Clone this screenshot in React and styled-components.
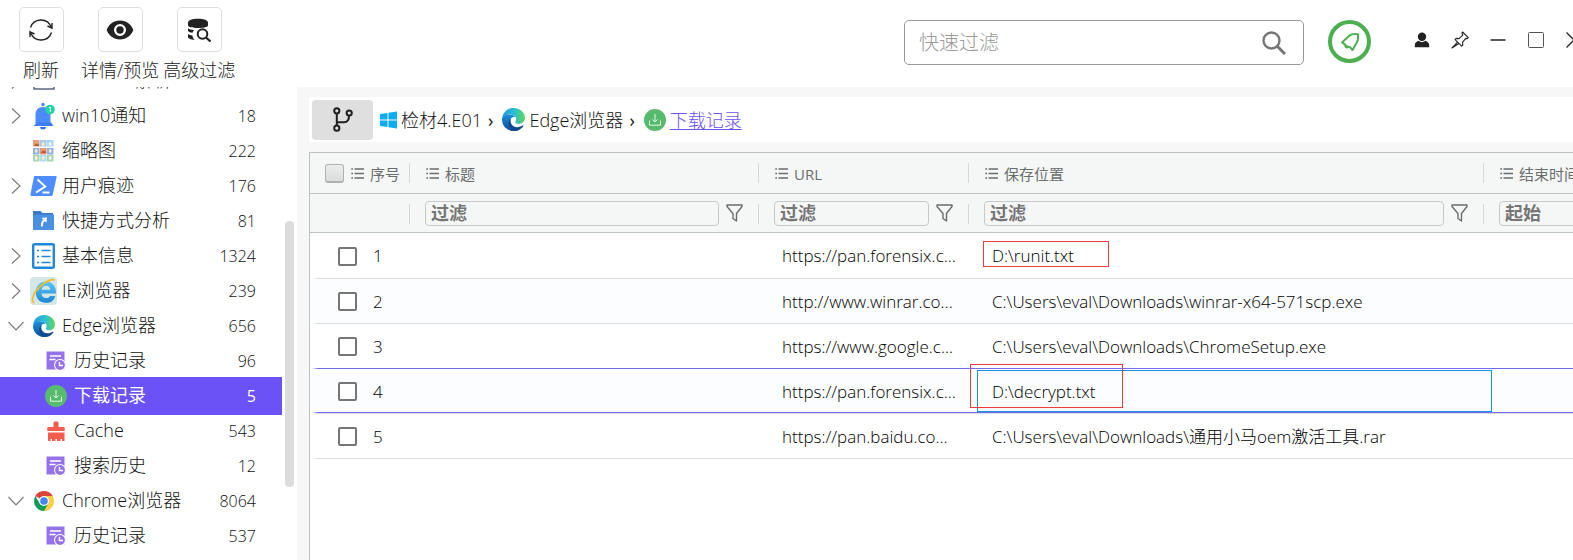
import React from "react";
import styled, { createGlobalStyle, css } from "styled-components";

const latin = '"Open Sans", "Noto Sans CJK SC", sans-serif';

const GlobalStyle = createGlobalStyle`
  *, *::before, *::after { box-sizing: border-box; }
  body {
    margin: 0;
    overflow: hidden;
    background: #fff;
    color: #111;
    font-family: ${latin};
    font-weight: 300;
    font-size: 18px;
  }
  button, input { font-family: inherit; }
  svg { display: block; flex: none; }
`;

const Page = styled.div`
  display: flex;
  flex-direction: column;
  height: 100vh;
`;

/* ---------- top bar ---------- */
const TopBar = styled.header`
  display: flex;
  flex: none;
  height: 87px;
  padding-left: 5px;
`;

const Tools = styled.div`
  display: flex;
  gap: 4px;
  padding-top: 7px;
`;

const ToolButton = styled.button`
  display: flex;
  flex-direction: column;
  align-items: center;
  gap: 5px;
  min-width: 72px;
  padding: 0;
  border: 0;
  background: none;
  color: #222;
  font-size: 18px;
  font-weight: 300;
  line-height: 26px;
  white-space: nowrap;
`;

const ToolIcon = styled.span`
  display: grid;
  place-items: center;
  width: 45px;
  height: 45px;
  border: 1px solid #dedede;
  border-radius: 5px;
`;

const TopRight = styled.div`
  display: flex;
  align-items: flex-start;
  margin-left: auto;
  margin-right: -20px;
  padding-top: 20px;
`;

const SearchBox = styled.label`
  display: flex;
  align-items: center;
  width: 400px;
  height: 45px;
  padding: 0 17px 0 13px;
  border: 1px solid #999;
  border-radius: 5px;
  color: #757575;
`;

const SearchInput = styled.input`
  flex: 1;
  min-width: 0;
  padding: 0 0 0 1px;
  border: 0;
  outline: 0;
  background: none;
  font-size: 20px;
  font-weight: 300;
  line-height: 28px;
  &::placeholder { color: #999; opacity: 1; }
`;

const BellButton = styled.button`
  display: grid;
  place-items: center;
  width: 43px;
  height: 43px;
  margin: 0 32px 0 24px;
  padding: 0;
  border: 4px solid #4caf50;
  border-radius: 50%;
  background: #fff;
  color: #4caf50;
`;

const WindowButton = styled.button`
  display: grid;
  place-items: center;
  width: 38px;
  height: 40px;
  padding: 0;
  border: 0;
  background: none;
  color: #222;
`;

/* ---------- body ---------- */
const Body = styled.div`
  display: flex;
  flex: 1;
  min-height: 0;
`;

const Sidebar = styled.nav`
  position: relative;
  flex: none;
  width: 297px;
  overflow: hidden;
`;

const Tree = styled.ul`
  margin: -24px 15px 0 0;
  padding: 0;
  list-style: none;
`;

const TreeRow = styled.li`
  display: flex;
  align-items: center;
  height: 35px;
  padding: 0 26px 0 ${(p) => (p.$child ? 12 : 0)}px;
  ${(p) =>
    p.$active &&
    css`
      height: 38px;
      margin: -1px 0 -2px;
      padding-bottom: 1px;
      background: #6b52f6;
      color: #fff;
      font-weight: 400;
    `}
`;

const Twisty = styled.span`
  display: grid;
  place-items: center;
  flex: none;
  width: 30px;
  padding-left: 2px;
  color: #777;
`;

const TreeIcon = styled.span`
  display: grid;
  place-items: center;
  flex: none;
  width: 27px;
  height: 28px;
`;

const TreeLabel = styled.span`
  flex: 1;
  padding: 0 0 2px 5px;
  font-size: 18px;
  line-height: 26px;
  white-space: nowrap;
`;

const Count = styled.span`
  font-size: 16px;
  line-height: 24px;
`;

const ScrollThumb = styled.div`
  position: absolute;
  top: 134px;
  right: 3px;
  width: 9px;
  height: 266px;
  border-radius: 4px;
  background: #dcdcdc;
`;

const Main = styled.main`
  display: flex;
  flex: 1;
  flex-direction: column;
  min-width: 0;
  padding: 10px 0 0 12px;
  background: #f7f7f7;
`;

const Crumbs = styled.div`
  display: flex;
  align-items: center;
  flex: none;
  height: 45px;
  padding-left: 3px;
  background: #fff;
`;

const BranchButton = styled.button`
  display: grid;
  place-items: center;
  width: 61px;
  height: 40px;
  margin-right: 7px;
  padding: 0;
  border: 0;
  border-radius: 4px;
  background: #dfdfdf;
  color: #1f1f1f;
`;

const Crumb = styled.span`
  display: flex;
  align-items: center;
  gap: 4px;
  font-size: 18px;
  line-height: 26px;
  white-space: nowrap;
`;

const CrumbLink = styled.a`
  color: #6b52f6;
  text-decoration: underline;
  text-underline-offset: 2px;
  text-decoration-thickness: 1px;
`;

const CrumbArrow = styled.span`
  padding: 0 9px 0 6px;
  font-weight: 400;
`;

const Grid = styled.div`
  flex: 1;
  min-height: 0;
  margin-top: 10px;
  overflow: hidden;
  border: solid #bcc3c7;
  border-width: 1px 0 0 1px;
  background: #fff;
`;

const Table = styled.table`
  width: 1474px;
  min-width: 100%;
  table-layout: fixed;
  border-collapse: separate;
  border-spacing: 0;
`;

const HeadCell = styled.th`
  position: relative;
  height: ${(p) => (p.$filter ? 39 : 41)}px;
  padding: 0 16px 0 15px;
  border-bottom: 1px solid #bcc3c7;
  background: #f5f7f7;
  color: #6a6d6d;
  font-weight: 400;
  text-align: left;
  &::after {
    content: "";
    position: absolute;
    right: 0;
    top: 10px;
    width: 1px;
    height: 20px;
    background: #d5d8d9;
  }
`;

const HeadLabel = styled.span`
  display: flex;
  align-items: center;
  gap: 6px;
  padding-left: ${(p) => (p.$first ? 0 : 1)}px;
  padding-top: 1px;
  font-size: 15px;
  line-height: 22px;
  white-space: nowrap;
`;

const FilterRow = styled.div`
  display: flex;
  align-items: center;
  gap: 7px;
`;

const FilterInput = styled.input`
  flex: 1;
  min-width: 0;
  height: 25px;
  padding: 0 5px;
  border: 1px solid #c6c9ca;
  border-radius: 4px;
  background: transparent;
  font-size: 18px;
  font-weight: 700;
  &::placeholder { color: #757575; opacity: 1; }
`;

const CheckBox = styled.input.attrs({ type: "checkbox" })`
  appearance: none;
  flex: none;
  width: 19px;
  height: 19px;
  margin: 0;
  border-radius: 2px;
  border: 2px solid #757575;
  background: #fff;
  ${(p) =>
    p.$all &&
    css`
      margin-right: 1px;
      border: 1px solid #b1b1b1;
      border-bottom-width: 2px;
      border-radius: 3px;
      background: linear-gradient(#ececec, #dcdcdc);
    `}
`;

const fade = (color) => `linear-gradient(to right, transparent 2px, ${color} 8px)`;

const Row = styled.tr`
  background: ${(p) => (p.$focus ? `${fade("#736bf2")} 0 calc(100% - 1px) / 100% 1px no-repeat,` : "")}
    ${(p) => fade(p.$line ? "#736bf2" : "#d9dcde")} 0 100% / 100% 1px no-repeat
    ${(p) => (p.$alt ? "#fcfdff" : "#fff")};
  &:first-child td { height: 46px; }
`;

const Cell = styled.td`
  position: relative;
  height: 45px;
  padding: 0 8px 0 23px;
  color: #000;
  font-size: 17px;
  line-height: 24px;
  white-space: nowrap;
`;

const Clip = styled.span`
  display: block;
  overflow: hidden;
  text-overflow: ellipsis;
`;

const NumberLabel = styled.label`
  display: flex;
  align-items: center;
  gap: 16px;
  padding-left: 5px;
`;

const CellFocus = styled.span`
  position: absolute;
  inset: 1px -8px 2px 8px;
  border: 1px solid #1292e6;
`;

const RedMark = styled.span`
  position: absolute;
  border: 1px solid #f23c3c;
  ${(p) => (p.$wide ? "left: 1px; top: -5px; width: 153px; height: 44px;" : "left: 14px; top: 8px; width: 126px; height: 26px;")}
`;

/* ---------- icons ---------- */
const Svg = ({ w, h = w, vb, children, ...rest }) => (
  <svg width={w} height={h} viewBox={vb || `0 0 ${w} ${h}`} fill="none" aria-hidden="true" {...rest}>
    {children}
  </svg>
);

const RefreshIcon = () => (
  <Svg w={24} stroke="currentColor" strokeWidth="1.4">
    <path d="M1.500 9.500A11 11 0 0 1 22 8.500M23 5V10.200L18.500 8M22.500 14.500A11 11 0 0 1 2 15.500M1 19V13.800L5.500 16" />
  </Svg>
);

const EyeIcon = () => (
  <Svg w={28} h={20}>
    <path fill="currentColor" fillRule="evenodd" d="M14 .6C7.4.6 2.600 4.600.7 10c1.900 5.400 6.700 9.400 13.300 9.400s11.400-4 13.300-9.400C25.400 4.600 20.600.6 14 .6Zm0 3.400a6 6 0 1 1 0 12 6 6 0 0 1 0-12Z" />
    <circle cx="14" cy="10" r="3.700" fill="currentColor" />
  </Svg>
);

const DbSearchIcon = () => (
  <Svg w={24}>
    <path fill="currentColor" d="M1 4.500C1 2.300 5.500.8 11 .8s10 1.500 10 3.700v2.700C21 9 16.500 10 11 10S1 9 1 7.200ZM1 10.200c1.200 1 3.400 1.600 6.200 1.900-.9.800-1.400 1.700-1.700 2.700C2.800 14.400 1 13.600 1 12.400ZM1 16c1.200.9 2.700 1.300 4.400 1.500.2 1.700 1 3.300 2.300 4.400C3.700 21.500 1 20.500 1 19Z" />
    <circle cx="15.500" cy="16" r="4.800" stroke="currentColor" strokeWidth="2" />
    <path d="m19 19.500 4.500 4" stroke="currentColor" strokeWidth="2.200" />
  </Svg>
);

const SearchIcon = () => (
  <Svg w={24} stroke="currentColor" strokeWidth="2.400">
    <circle cx="9.500" cy="9.500" r="8" />
    <path d="m15 15 8 8" strokeWidth="3" />
  </Svg>
);

const BellOutline = () => (
  <Svg w={20} stroke="currentColor" strokeWidth="2" strokeLinejoin="round">
    <path d="M2 10.500 9.500 3.600c2-1.600 4.500-2 8.300-1.400.6 3.200.5 5.600-.9 8L12.500 18 10 15.200 5.400 14l-.2-1.400Z" />
    <path d="M5.500 14.200 7.800 15.500" strokeWidth="3" />
  </Svg>
);

const UserIcon = () => (
  <Svg w={16}>
    <circle cx="8" cy="4.700" r="4.200" fill="currentColor" />
    <path fill="currentColor" d="M.8 15.200v-2c0-2 1.600-3.600 3.800-4.400a5.500 5.500 0 0 0 6.800 0c2.200.8 3.800 2.400 3.800 4.400v2Z" />
  </Svg>
);

const PinIcon = () => (
  <Svg w={18} stroke="currentColor" strokeWidth="1.100" strokeLinejoin="round">
    <path d="m11.600 1 5.700 5.600-1 1-1.500-.2-3.200 3.800.2 2.800-1.200 1.100-6.500-6.500 1-1.200 3 .2 3.700-3.400-.9-2.400Z" />
    <path d="M6.600 11.200 1 17l6.800-4.500" />
  </Svg>
);

const MinIcon = () => <Svg w={16}><path d="M.5 8h15" stroke="currentColor" strokeWidth="1.500" /></Svg>;
const MaxIcon = () => <Svg w={16}><rect x=".5" y=".5" width="15" height="15" rx="1" stroke="#555" /></Svg>;
const CloseIcon = () => <Svg w={16}><path d="m.5.5 15 15m0-15-15 15" stroke="currentColor" strokeWidth="1.300" /></Svg>;

const ChevronRight = () => <Svg w={10} h={16}><path d="m1 .5 8 7.500-8 7.500" stroke="currentColor" strokeWidth="1.100" /></Svg>;
const ChevronDown = () => <Svg w={16} h={10}><path d="m.5 1 7.500 8 7.500-8" stroke="currentColor" strokeWidth="1.100" /></Svg>;

const DocIcon = () => <Svg w={22} h={20}><rect x="1" y="1" width="20" height="17" stroke="#5b6485" strokeWidth="1.500" /></Svg>;

const BellBadge = () => (
  <Svg w={24} h={28}>
    <circle cx="11" cy="2.500" r="1.700" fill="#4285f7" />
    <path d="M3.500 21.500v-9C3.500 8 6.500 5 11 5s7.500 3 7.500 7.500v9Z" fill="#4a8bff" />
    <path d="M1.500 24 5 20.500h14l2.500 3.500Z" fill="#3d7bf3" />
    <path d="M8 25h6l-1 2.200H9Z" fill="#2a6df0" />
    <circle cx="18" cy="7.500" r="4.800" fill="#22d3a5" />
    <path d="m17 6 1.300-.9V10" stroke="#fff" />
  </Svg>
);

const thumbFills = [
  ["#e59f7b", "#a9c9ee", "#a9d6f4"],
  ["#8eb0e8", "#e8946c", "#8eb0e8"],
  ["#a9d2ae", "#b1dcf5", "#a9d2ae"],
];

const ThumbsIcon = () => (
  <Svg w={21} h={22}>
    {thumbFills.map((line, r) =>
      line.map((fill, c) => (
        <g key={`${r}${c}`}>
          <rect x={c * 7} y={r * 7 + (r ? 1 : 0)} width="6.500" height="6.500" fill={fill} />
          {fill.startsWith("#e") ? (
            <path d={`M${c * 7 + 1} ${r * 7 + 6}l2-2.500 1.300 1 1-1.200 1 2.700Z`} fill="#b75c38" />
          ) : (
            <ellipse cx={c * 7 + 3.2} cy={r * 7 + 4} rx="1.400" ry="2" fill={(r + c) % 2 ? "#f8edbd" : "#eef8ee"} />
          )}
        </g>
      ))
    )}
  </Svg>
);

const ShellIcon = () => (
  <Svg w={27} h={22}>
    <path d="M4.500 1h21c.8 0 1.300.5 1.100 1.300l-4 17.700c-.2.700-.7 1-1.300 1H1.300C.6 21 .2 20.500.4 19.800L4 1.500Z" fill="#4d8dff" />
    <path d="m7.500 4.500 7.700 7L6 17.500M12.500 17.500h7" stroke="#fff" strokeWidth="2" />
  </Svg>
);

const FolderLink = () => (
  <Svg w={21} h={21}>
    <path d="M0 1h7.500l2 2H20v3H0Z" fill="#3a77c2" />
    <path d="M0 4.500h21V20H0Z" fill="#4990e2" />
    <path d="M9 16.500c-.4-3 .3-5.300 3.300-6.800" stroke="#fff" strokeWidth="2" />
    <path d="m8.500 8 5.500-.7-.5 5.400Z" fill="#fff" />
  </Svg>
);

const ListBox = () => (
  <Svg w={23} h={26}>
    <rect x="1.200" y="1.200" width="20.600" height="23.600" rx="1.500" stroke="#1f87dc" strokeWidth="2.400" />
    <path d="M9.500 7.500h9M9.500 13.500h9M9.500 19.500h9M5 7.500h2M5 13.500h2M5 19.500h2" stroke="#1f87dc" strokeWidth="1.300" />
  </Svg>
);

const IeIcon = () => (
  <Svg w={27} h={28}>
    <defs>
      <linearGradient id="ie" x1="0" y1="0" x2="0" y2="1"><stop stopColor="#5cc8f8" /><stop offset="1" stopColor="#1b86d3" /></linearGradient>
    </defs>
    <rect width="27" height="28" rx="4" fill="#d5e6e6" />
    <path fill="url(#ie)" fillRule="evenodd" d="M26 16.500H11.500c.3 3 2 4.600 4.600 4.600 1.800 0 3-.7 3.900-2.200h5.400c-1.400 4.500-4.800 6.900-9.400 6.900-6 0-10.200-4.200-10.200-10.300C5.800 9 10 4.500 15.800 4.500c6.400 0 10.600 4.700 10.200 12ZM11.600 12.800h8.700c-.3-2.500-1.800-4-4.200-4-2.500 0-4 1.500-4.500 4Z" />
    <path d="M4 26C.5 23.500 3.500 15.500 10 9.500 16 4 22.500 1.200 24.600 3.400" stroke="#f4bd2c" strokeWidth="1.800" />
  </Svg>
);

const EdgeIcon = ({ size = 22 }) => (
  <Svg w={size} vb="0 0 24 24">
    <defs>
      <linearGradient id="edgeTop" x1="0" y1=".5" x2="1" y2=".5"><stop stopColor="#1f9ae0" /><stop offset=".55" stopColor="#2dc0d2" /><stop offset="1" stopColor="#62d855" /></linearGradient>
      <linearGradient id="edgeSide" x1="0" y1="0" x2="0" y2="1"><stop stopColor="#1a8fdd" /><stop offset="1" stopColor="#0b4f9e" /></linearGradient>
    </defs>
    <path d="M.2 11C.8 4.600 5.600 0 12 0c6.800 0 12 4.800 12 10.300 0 4-3 6.300-6.300 6.300-2.500 0-3.900-.8-3.900-1.700 0-.8 1-1 1-3 0-2.600-2.700-5-6.600-5C4.500 6.900 1.500 8.700.2 11Z" fill="url(#edgeTop)" />
    <path d="M0 12c.3-3.300 3.400-5.200 7.500-5.200 3.300 0 5.300 1.400 6.300 2.700-3.600-.6-6.100 2-6.100 5.300 0 4.400 3 7.600 6.500 9A12 12 0 0 1 0 12Z" fill="url(#edgeSide)" />
    <path d="M9.800 10.700c-2.200 3.600.2 9.300 6 9.300 2.300 0 4.600-1 5.800-1.700.5-.2.900.2.600.7C20.500 21.500 17 24 13.500 24 9.500 23.300 6.500 19.500 6.900 15c.2-2 1.200-3.600 2.900-4.300Z" fill="#114a8b" />
  </Svg>
);

const HistoryIcon = () => (
  <Svg w={20}>
    <path d="M.5.5h18v18H.5Z" fill="#9672ea" />
    <path d="M4 5h11M3.500 8.500h6" stroke="#fff" strokeWidth="1.500" />
    <circle cx="14" cy="14" r="6" fill="#fff" />
    <circle cx="14" cy="14" r="4.900" fill="#9672ea" />
    <path d="M13.500 11v3.500H17" stroke="#fff" strokeWidth="1.400" />
  </Svg>
);

const DownloadIcon = () => (
  <Svg w={22}>
    <circle cx="11" cy="11" r="11" fill="#57bb6d" />
    <path d="M11 5v8m-2.500-2.500L11 13l2.500-2.500M5.500 11.500v4.700h11v-4.700" stroke="#e3f5e6" strokeWidth="1" />
  </Svg>
);

const CacheIcon = () => (
  <Svg w={18} h={20}>
    <path fill="#f45d4c" d="M6.500 1.500c0-1.500 5-1.500 5 0V6H17c.5 0 .7.300.7.700V10H.3V6.700C.3 6.300.5 6 1 6h5.500ZM1 11.500h16.500V20H15v-2H13.500V20H10v-2H8.500V20H5v-2H3.500V20H1Z" />
  </Svg>
);

const ChromeIcon = () => (
  <Svg w={20}>
    <path d="M10 10 1.340 5A10 10 0 0 1 18.660 5Z" fill="#db4437" />
    <path d="M10 10V5h8.660A10 10 0 0 1 10 20Z" fill="#ffcd40" />
    <path d="M1.340 5 5.700 12.500 10 10l4.300 2.500L10 20A10 10 0 0 1 1.340 5Z" fill="#0f9d58" />
    <circle cx="10" cy="10" r="5" fill="#fff" />
    <circle cx="10" cy="10" r="3.800" fill="#4285f4" />
  </Svg>
);

const BranchIcon = () => (
  <Svg w={20} h={25} stroke="currentColor" strokeWidth="2">
    <circle cx="3.800" cy="3.800" r="2.600" />
    <circle cx="3.800" cy="21.200" r="2.600" />
    <circle cx="16.200" cy="6" r="2.600" />
    <path d="M3.800 6.300v12.400M4 15.200h7c3 0 5-2 5-6.500" />
  </Svg>
);

const WindowsIcon = () => (
  <Svg w={17} h={18}>
    <path d="M0 3 7.500 2v6.500H0ZM8.500 1.800 17 .6v7.900H8.500ZM0 9.500h7.500V16L0 15ZM8.500 9.500H17v7.900l-8.500-1.200Z" fill="#0cabf5" />
  </Svg>
);

const ListIcon = () => (
  <Svg w={13} h={11} stroke="currentColor" strokeWidth="1.300">
    <path d="M3.500 1H13M3.500 5.500H13M3.500 10H13M.3 1H2M.3 5.500H2M.3 10H2" />
  </Svg>
);

const FunnelIcon = () => (
  <Svg w={17} h={18} stroke="#6a6d6d" strokeWidth="1.400" strokeLinejoin="round">
    <path d="M1 1h15v1.500L10.500 9.500V17L7 14.500v-5L1 2.500Z" />
  </Svg>
);

/* ---------- data ---------- */
const tree = [
  { label: "Windows解析", icon: <DocIcon />, open: false },
  { label: "win10通知", count: 18, icon: <BellBadge />, open: false },
  { label: "缩略图", count: 222, icon: <ThumbsIcon /> },
  { label: "用户痕迹", count: 176, icon: <ShellIcon />, open: false },
  { label: "快捷方式分析", count: 81, icon: <FolderLink /> },
  { label: "基本信息", count: 1324, icon: <ListBox />, open: false },
  { label: "IE浏览器", count: 239, icon: <IeIcon />, open: false },
  { label: "Edge浏览器", count: 656, icon: <EdgeIcon />, open: true },
  { label: "历史记录", count: 96, icon: <HistoryIcon />, child: true },
  { label: "下载记录", count: 5, icon: <DownloadIcon />, child: true, active: true },
  { label: "Cache", count: 543, icon: <CacheIcon />, child: true },
  { label: "搜索历史", count: 12, icon: <HistoryIcon />, child: true },
  { label: "Chrome浏览器", count: 8064, icon: <ChromeIcon />, open: true },
  { label: "历史记录", count: 537, icon: <HistoryIcon />, child: true },
];

const columns = [
  { label: "序号", width: 100 },
  { label: "标题", width: 349, filter: "过滤" },
  { label: "URL", width: 210, filter: "过滤" },
  { label: "保存位置", width: 515, filter: "过滤" },
  { label: "结束时间", width: 300, filter: "起始" },
];

const rows = [
  { url: "https://pan.forensix.c...", path: "D:\\runit.txt", mark: true },
  { url: "http://www.winrar.co...", path: "C:\\Users\\eval\\Downloads\\winrar-x64-571scp.exe" },
  { url: "https://www.google.c...", path: "C:\\Users\\eval\\Downloads\\ChromeSetup.exe", line: true },
  { url: "https://pan.forensix.c...", path: "D:\\decrypt.txt", mark: true, focus: true },
  { url: "https://pan.baidu.co...", path: "C:\\Users\\eval\\Downloads\\通用小马oem激活工具.rar" },
];

export default function App() {
  return (
    <Page>
      <GlobalStyle />
      <TopBar>
        <Tools>
          <ToolButton><ToolIcon><RefreshIcon /></ToolIcon>刷新</ToolButton>
          <ToolButton><ToolIcon><EyeIcon /></ToolIcon>详情/预览</ToolButton>
          <ToolButton><ToolIcon><DbSearchIcon /></ToolIcon>高级过滤</ToolButton>
        </Tools>
        <TopRight>
          <SearchBox>
            <SearchInput type="text" placeholder="快速过滤" aria-label="快速过滤" />
            <SearchIcon />
          </SearchBox>
          <BellButton aria-label="通知"><BellOutline /></BellButton>
          <WindowButton aria-label="用户"><UserIcon /></WindowButton>
          <WindowButton aria-label="置顶"><PinIcon /></WindowButton>
          <WindowButton aria-label="最小化"><MinIcon /></WindowButton>
          <WindowButton aria-label="最大化"><MaxIcon /></WindowButton>
          <WindowButton aria-label="关闭"><CloseIcon /></WindowButton>
        </TopRight>
      </TopBar>
      <Body>
        <Sidebar>
          <Tree>
            {tree.map((n, i) => (
              <TreeRow key={i} $child={n.child} $active={n.active}>
                <Twisty>{n.open === undefined ? null : n.open ? <ChevronDown /> : <ChevronRight />}</Twisty>
                <TreeIcon>{n.icon}</TreeIcon>
                <TreeLabel>{n.label}</TreeLabel>
                <Count>{n.count}</Count>
              </TreeRow>
            ))}
          </Tree>
          <ScrollThumb />
        </Sidebar>
        <Main>
          <Crumbs>
            <BranchButton aria-label="分支"><BranchIcon /></BranchButton>
            <Crumb><WindowsIcon />检材4.E01</Crumb>
            <CrumbArrow>›</CrumbArrow>
            <Crumb><EdgeIcon size={23} />Edge浏览器</Crumb>
            <CrumbArrow>›</CrumbArrow>
            <Crumb><DownloadIcon /><CrumbLink href="#downloads">下载记录</CrumbLink></Crumb>
          </Crumbs>
          <Grid>
            <Table>
              <colgroup>
                {columns.map((c) => <col key={c.label} width={c.width} />)}
              </colgroup>
              <thead>
                <tr>
                  {columns.map((c) => (
                    <HeadCell key={c.label} scope="col">
                      <HeadLabel $first={!c.filter}>
                        {!c.filter && <CheckBox $all aria-label="全选" />}
                        <ListIcon />
                        {c.label}
                      </HeadLabel>
                    </HeadCell>
                  ))}
                </tr>
                <tr>
                  {columns.map((c) => (
                    <HeadCell key={c.label} $filter>
                      {c.filter && (
                        <FilterRow>
                          <FilterInput type="text" placeholder={c.filter} aria-label={c.label} />
                          <FunnelIcon />
                        </FilterRow>
                      )}
                    </HeadCell>
                  ))}
                </tr>
              </thead>
              <tbody>
                {rows.map((r, i) => (
                  <Row key={i} $line={r.line} $focus={r.focus} $alt={i % 2 === 1}>
                    <Cell><NumberLabel><CheckBox />{i + 1}</NumberLabel></Cell>
                    <Cell />
                    <Cell><Clip>{r.url}</Clip></Cell>
                    <Cell>
                      {r.path}
                      {r.focus && <CellFocus />}
                      {r.mark && <RedMark $wide={r.focus} />}
                    </Cell>
                    <Cell />
                  </Row>
                ))}
              </tbody>
            </Table>
          </Grid>
        </Main>
      </Body>
    </Page>
  );
}
